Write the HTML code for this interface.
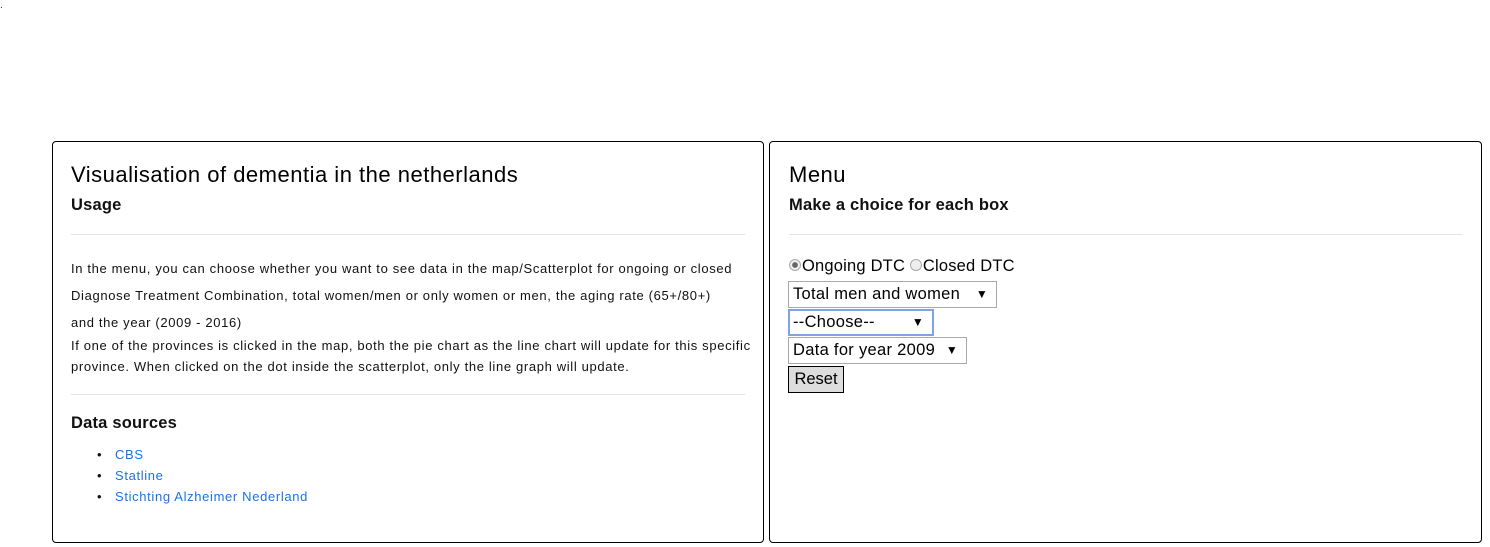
<!DOCTYPE html>
<html><head><style>
body{margin:0;width:1490px;height:547px;background:#fff;font-family:"Liberation Sans",sans-serif;color:#212529;position:relative;overflow:hidden}
.box{position:absolute;top:141px;height:402px;border:1px solid #000;border-radius:4px;box-sizing:border-box}
.a{position:absolute;white-space:nowrap}
h1{font-size:22px;font-weight:500;margin:0;color:#000;letter-spacing:0.5px}
.h{font-size:16.5px;font-weight:bold;color:#111;letter-spacing:0.2px}
.hr{position:absolute;height:1px;background:#e5e5e5}
.p{font-size:13px;color:#111;letter-spacing:0.65px}
a{color:#1a73e8;text-decoration:none}
.sel{position:absolute;border:1px solid #a9a9a9;background:#fff;font-size:16.5px;color:#000;box-sizing:border-box;height:27px;line-height:25px;padding-left:4px;letter-spacing:0.3px}
.sel span{position:absolute;right:8px;font-size:12px}
.dot{display:inline-block;width:12px;height:12px;border-radius:50%;border:1px solid #aaa;box-sizing:border-box;background:#eee;vertical-align:0;margin-right:1px}
</style></head><body>
<div class="a" style="left:0;top:0;font-size:10px">.</div>
<div class="box" style="left:52px;width:712px"></div>
<div class="box" style="left:769px;width:713px"></div>

<h1 class="a" style="left:71px;top:162px">Visualisation of dementia in the netherlands</h1>
<div class="a h" style="left:71px;top:196px">Usage</div>
<div class="hr" style="left:71px;top:234px;width:674px"></div>
<div class="a p" style="left:71px;top:261px">In the menu, you can choose whether you want to see data in the map/Scatterplot for ongoing or closed</div>
<div class="a p" style="left:71px;top:288px">Diagnose Treatment Combination, total women/men or only women or men, the aging rate (65+/80+)</div>
<div class="a p" style="left:71px;top:315px">and the year (2009 - 2016)</div>
<div class="a p" style="left:71px;top:338px">If one of the provinces is clicked in the map, both the pie chart as the line chart will update for this specific</div>
<div class="a p" style="left:71px;top:359px">province. When clicked on the dot inside the scatterplot, only the line graph will update.</div>
<div class="hr" style="left:71px;top:394px;width:674px"></div>
<div class="a h" style="left:71px;top:414px">Data sources</div>
<div class="a p" style="left:97px;top:447px">•</div><a class="a p" style="left:115px;top:447px;color:#1a73e8">CBS</a>
<div class="a p" style="left:97px;top:468px">•</div><a class="a p" style="left:115px;top:468px;color:#1a73e8">Statline</a>
<div class="a p" style="left:97px;top:489px">•</div><a class="a p" style="left:115px;top:489px;color:#1a73e8">Stichting Alzheimer Nederland</a>

<h1 class="a" style="left:789px;top:162px">Menu</h1>
<div class="a h" style="left:789px;top:196px">Make a choice for each box</div>
<div class="hr" style="left:789px;top:234px;width:674px"></div>
<div class="a" style="left:789px;top:257px;font-size:16.5px;color:#000;letter-spacing:0.2px"><span class="dot" style="background:radial-gradient(#666 35%,#eee 45%)"></span>Ongoing DTC <span class="dot"></span>Closed DTC</div>
<div class="sel" style="left:788px;top:281px;width:209px">Total men and women<span>▼</span></div>
<div class="sel" style="left:788px;top:309px;width:146px;border:2px solid #7fa4e6;line-height:23px;padding-left:3px">--Choose--<span>▼</span></div>
<div class="sel" style="left:788px;top:337px;width:179px">Data for year 2009<span>▼</span></div>
<div class="a" style="left:788px;top:366px;width:56px;height:27px;border:1px solid #000;background:#ddd;box-sizing:border-box;font-size:16.5px;line-height:25px;text-align:center;color:#000">Reset</div>
</body></html>
